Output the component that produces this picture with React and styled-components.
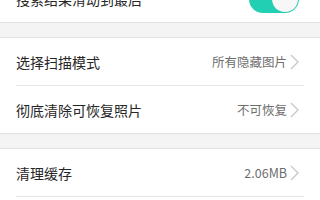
import styled, { createGlobalStyle } from "styled-components";

const GlobalStyle = createGlobalStyle`
  body {
    margin: 0;
    background: #ffffff;
    font-family: "Noto Sans CJK SC", "Noto Sans", sans-serif;
  }
`;

const Screen = styled.div`
  width: 320px;
  height: 200px;
  overflow: hidden;
  background: #ffffff;
`;

const List = styled.div`
  margin-top: -25px;
`;

const Group = styled.div`
  background: #ffffff;
`;

const Gap = styled.div`
  height: 14px;
  background: #f4f4f4;
  border-top: 1px solid #e0e0e0;
  border-bottom: 1px solid #e0e0e0;
`;

const Row = styled.div`
  height: ${(p) => (p.$divider ? 47 : 47)}px;
  margin: 0 16px;
  display: flex;
  align-items: center;
  justify-content: space-between;
  border-bottom: ${(p) => (p.$divider ? "1px solid #e6e6e6" : "none")};
`;

const Label = styled.span`
  font-size: 14px;
  color: #262626;
`;

const Accessory = styled.div`
  display: flex;
  align-items: center;
  gap: 3px;
  margin-right: 5px;
`;

const Value = styled.span`
  font-size: 12.5px;
  color: #6e6e6e;
`;

const Toggle = styled.div`
  width: 50px;
  height: 28px;
  border-radius: 14px;
  background: #22cfb2;
  display: flex;
  align-items: center;
  justify-content: ${(p) => (p.$on ? "flex-end" : "flex-start")};
  padding: 0 1px;
  box-sizing: border-box;
`;

const Knob = styled.div`
  width: 26px;
  height: 26px;
  border-radius: 50%;
  background: #f7f7f7;
`;

const Chevron = () => (
  <svg width="9" height="16" viewBox="0 0 9 16">
    <path d="M1 1 L8 8 L1 15" fill="none" stroke="#c9c9c9" strokeWidth="1.4" />
  </svg>
);

const Item = ({ label, value, divider }) => (
  <Row $divider={divider}>
    <Label>{label}</Label>
    <Accessory>
      <Value>{value}</Value>
      <Chevron />
    </Accessory>
  </Row>
);

export default function App() {
  return (
    <Screen>
      <GlobalStyle />
      <List>
        <Group>
          <Row>
            <Label>搜索结果滑动到最后</Label>
            <Accessory>
              <Toggle $on>
                <Knob />
              </Toggle>
            </Accessory>
          </Row>
        </Group>
        <Gap />
        <Group>
          <Item label="选择扫描模式" value="所有隐藏图片" divider />
          <Item label="彻底清除可恢复照片" value="不可恢复" />
        </Group>
        <Gap />
        <Group>
          <Item label="清理缓存" value="2.06MB" divider />
        </Group>
      </List>
    </Screen>
  );
}
